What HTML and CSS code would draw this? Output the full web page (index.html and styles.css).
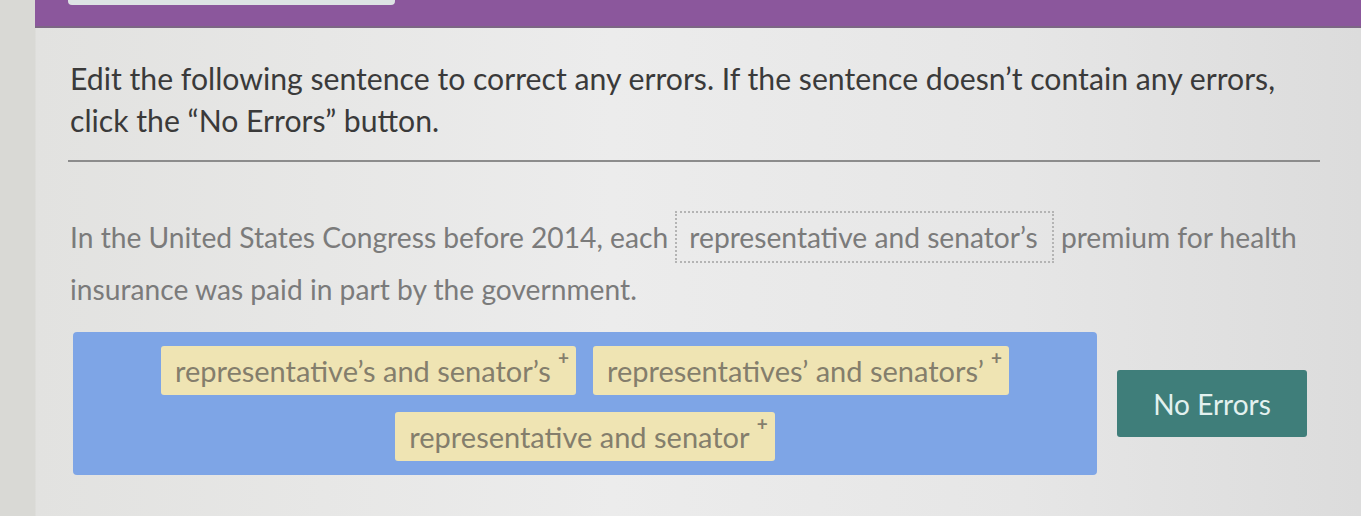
FILE: index.html
```html
<!DOCTYPE html>
<html lang="en">
    <head>
        <meta charset="UTF-8" />
        <title>No Errors</title>
        <link rel="stylesheet" href="styles.css">
    </head>

    <body>
        <div class="page">
            <div class="topbar">
                <div class="tab"></div>
            </div>
            <div class="content">
                <p class="prompt">
                    Edit the following sentence to correct any errors. If the sentence doesn’t contain any errors,
                    click the “No Errors” button.
                </p>
                <hr class="rule" />
                <p class="sentence">
                    In the United States Congress before 2014, each
                    <span class="blank">representative and senator’s</span>
                    premium for health insurance was paid in part by the government.
                </p>
                <div class="answers">
                    <div class="choices">
                        <span class="chip">representative’s and senator’s<i>+</i></span>
                        <span class="chip">representatives’ and senators’<i>+</i></span>
                        <span class="chip">representative and senator<i>+</i></span>
                    </div>
                    <button class="noerr">No Errors</button>
                </div>
            </div>
        </div>
    </body>
</html>
```

FILE: styles.css
```css
body {
    margin: 0;
    background: linear-gradient(90deg, #d9d9d5 0, #d9d9d5 35px, #e2e2e0 36px, #ececec 45%, #e6e6e6 75%, #dcdcdc 100%);
    font-family: Lato, "Liberation Sans", sans-serif;
}

.page {
    width: 1361px;
    height: 516px;
    overflow: hidden;
}

.topbar {
    margin-left: 35px;
    height: 26px;
    background: #8b579c;
    border-bottom: 2px solid #7c6784;
}

.tab {
    margin-left: 33px;
    width: 327px;
    height: 5px;
    background: #dde3e4;
    border-radius: 0 0 4px 4px;
}

.content {
    padding: 0 41px 0 68px;
}

/* 문제 안내 */
.prompt {
    width: 1215px;
    margin: 29px 0 0 2px;
    color: #3a3a3a;
    font-size: 30.2px;
    line-height: 42px;
}

.rule {
    margin: 19px 0 0;
    border: 0;
    height: 2px;
    background: #8c8c8c;
}

/* 문장 */
.sentence {
    margin: 49px 0 0 2px;
    color: #7b7b7b;
    font-size: 28.2px;
    line-height: 52px;
}

.blank {
    display: inline-block;
    padding: 7px 14px 7px 12px;
    border: 2px dotted #b4b4b4;
    line-height: 34px;
}

/* 보기 영역 */
.answers {
    display: flex;
    align-items: center;
    margin-top: 17px;
}

.choices {
    display: flex;
    flex-wrap: wrap;
    justify-content: center;
    gap: 17px;
    width: 1024px;
    margin-left: 5px;
    padding: 14px 0;
    background: #7ea5e6;
    border-radius: 4px;
}

.chip {
    display: flex;
    align-items: flex-start;
    height: 49px;
    padding: 0 7px 0 14px;
    background: #efe4b3;
    border-radius: 3px;
    color: #847e6c;
    font-size: 29px;
    line-height: 49px;
}

.chip i {
    margin-left: 7px;
    font-style: normal;
    font-weight: 700;
    font-size: 19px;
    line-height: 24px;
}

.noerr {
    width: 190px;
    height: 67px;
    margin-left: 20px;
    border: 0;
    border-radius: 3px;
    background: #3f7e7a;
    color: #e3f1ef;
    font-family: Lato, "Liberation Sans", sans-serif;
    font-size: 28px;
}
```
